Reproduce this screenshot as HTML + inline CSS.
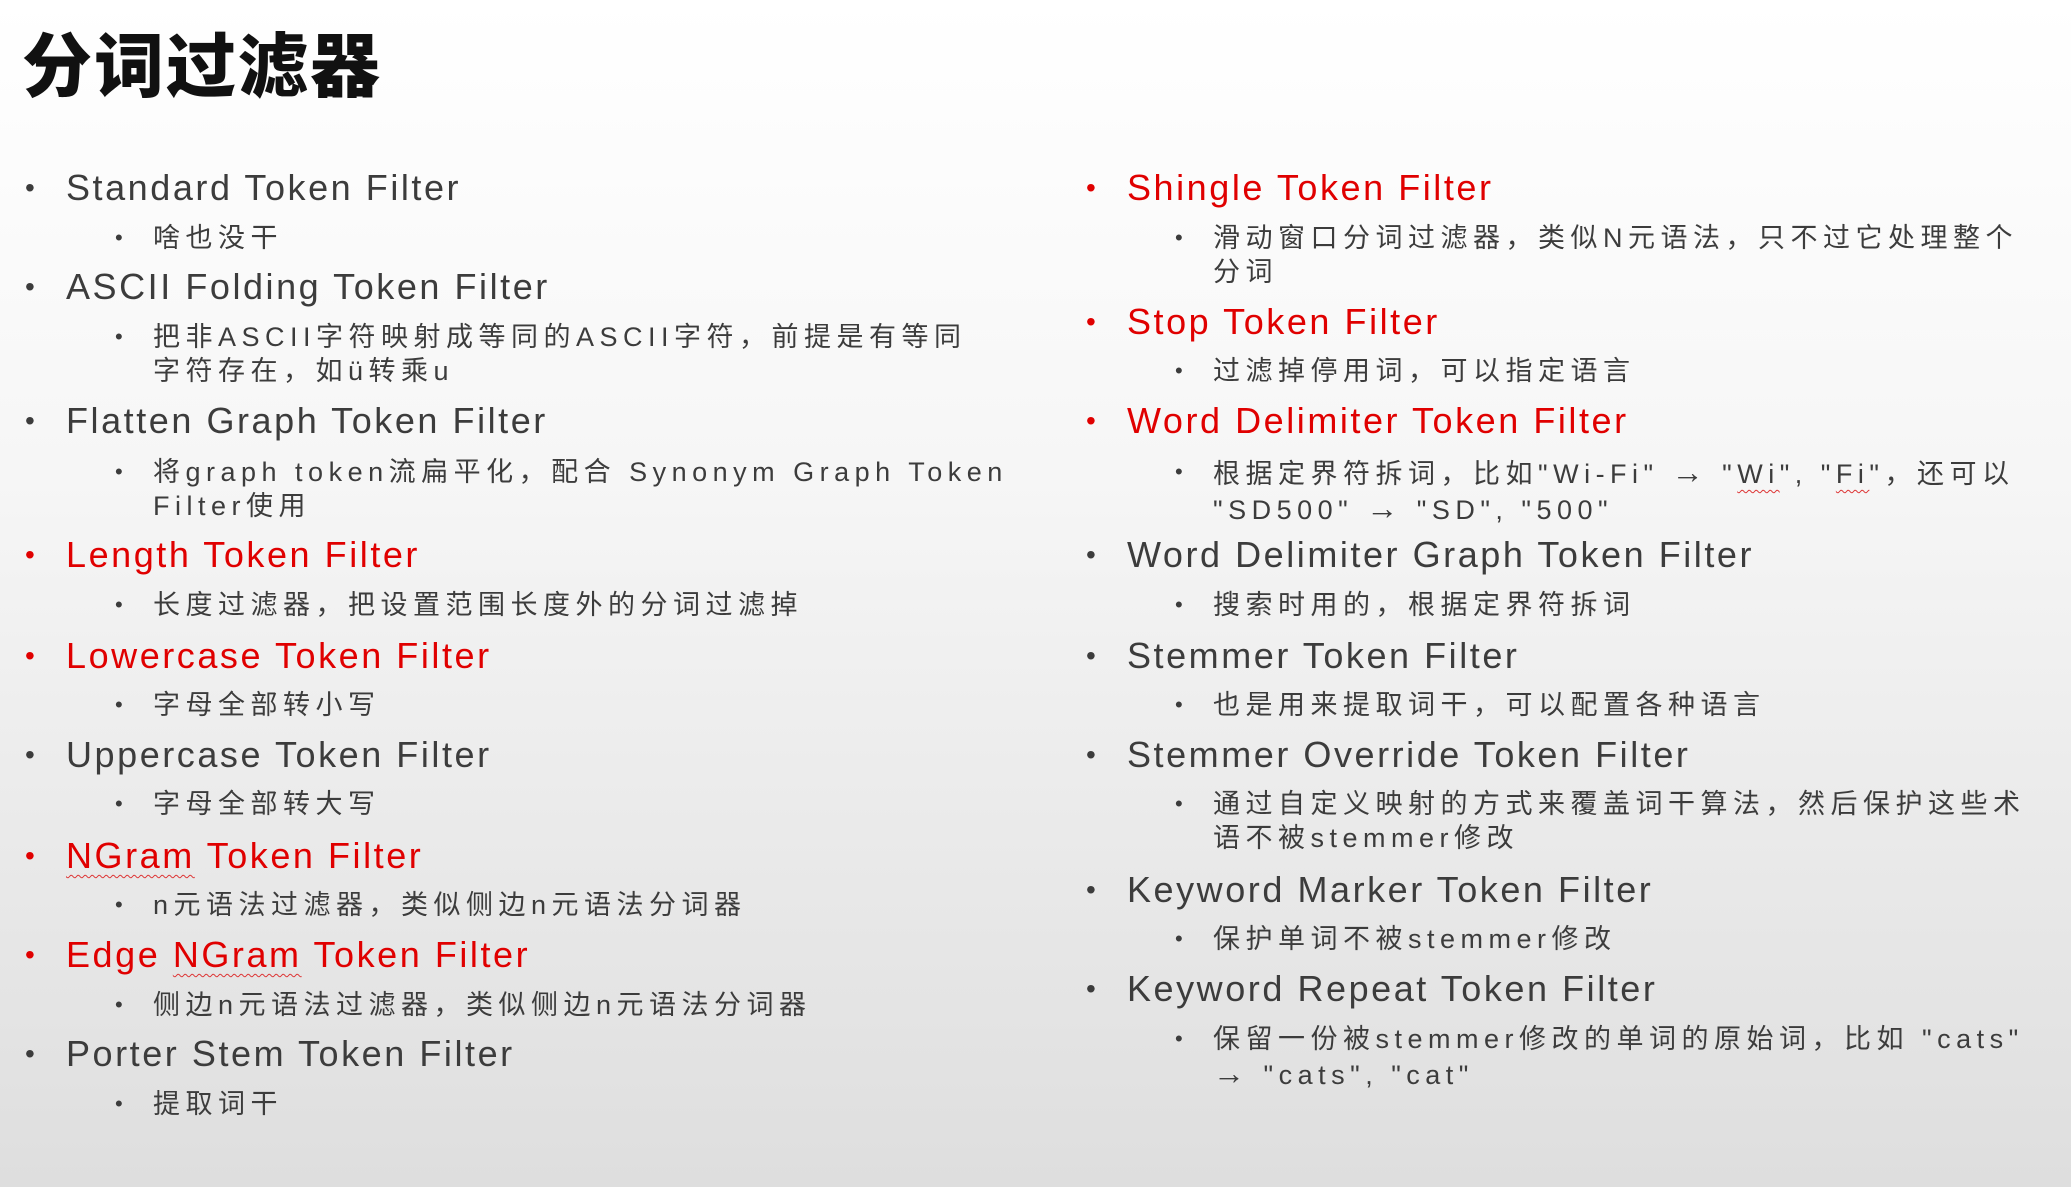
<!DOCTYPE html>
<html><head><meta charset="utf-8"><style>
html,body{margin:0;padding:0}
body{width:2071px;height:1187px;position:relative;overflow:hidden;background:linear-gradient(#ffffff 0%,#f6f6f6 40%,#dedede 100%);font-family:"Liberation Sans","Noto Sans CJK SC",sans-serif;color:#3c3c3c}
h1{position:absolute;left:22px;top:20px;margin:0;font-size:70px;font-weight:900;color:#111;font-family:"Noto Sans CJK SC",sans-serif;line-height:84px;letter-spacing:2px}
.a{position:absolute;font-size:36px;line-height:44px;letter-spacing:2.55px;white-space:nowrap}
.a::before{content:"•";position:absolute;left:-41px;font-size:28px}
.b{position:absolute;font-size:27px;line-height:34px;letter-spacing:5.5px;white-space:nowrap}
.b::before{content:"•";position:absolute;left:-38px;font-size:22px}
.r{color:#e00000}
.w{text-decoration:underline wavy #d33;text-decoration-thickness:1px;text-underline-offset:6px}
.ar{font-size:32px}
</style></head><body>
<h1>分词过滤器</h1>

<div class="a" style="left:66px;top:166px">Standard Token Filter</div>
<div class="b" style="left:153px;top:221px">啥也没干</div>
<div class="a" style="left:66px;top:265px">ASCII Folding Token Filter</div>
<div class="b" style="left:153px;top:320px">把非ASCII字符映射成等同的ASCII字符，前提是有等同<br>字符存在，如ü转乘u</div>
<div class="a" style="left:66px;top:399px">Flatten Graph Token Filter</div>
<div class="b" style="left:153px;top:455px">将graph token流扁平化，配合 Synonym Graph Token<br>Filter使用</div>
<div class="a r" style="left:66px;top:533px">Length Token Filter</div>
<div class="b" style="left:153px;top:588px">长度过滤器，把设置范围长度外的分词过滤掉</div>
<div class="a r" style="left:66px;top:634px">Lowercase Token Filter</div>
<div class="b" style="left:153px;top:688px">字母全部转小写</div>
<div class="a" style="left:66px;top:733px">Uppercase Token Filter</div>
<div class="b" style="left:153px;top:787px">字母全部转大写</div>
<div class="a r" style="left:66px;top:834px"><span class="w">NGram</span> Token Filter</div>
<div class="b" style="left:153px;top:888px">n元语法过滤器，类似侧边n元语法分词器</div>
<div class="a r" style="left:66px;top:933px">Edge <span class="w">NGram</span> Token Filter</div>
<div class="b" style="left:153px;top:988px">侧边n元语法过滤器，类似侧边n元语法分词器</div>
<div class="a" style="left:66px;top:1032px">Porter Stem Token Filter</div>
<div class="b" style="left:153px;top:1087px">提取词干</div>

<div class="a r" style="left:1127px;top:166px">Shingle Token Filter</div>
<div class="b" style="left:1213px;top:221px">滑动窗口分词过滤器，类似N元语法，只不过它处理整个<br>分词</div>
<div class="a r" style="left:1127px;top:300px">Stop Token Filter</div>
<div class="b" style="left:1213px;top:354px">过滤掉停用词，可以指定语言</div>
<div class="a r" style="left:1127px;top:399px">Word Delimiter Token Filter</div>
<div class="b" style="left:1213px;top:455px">根据定界符拆词，比如"Wi-Fi" <span class="ar">→</span> "<span class="w">Wi</span>", "<span class="w">Fi</span>"，还可以<br>"SD500" <span class="ar">→</span> "SD", "500"</div>
<div class="a" style="left:1127px;top:533px">Word Delimiter Graph Token Filter</div>
<div class="b" style="left:1213px;top:588px">搜索时用的，根据定界符拆词</div>
<div class="a" style="left:1127px;top:634px">Stemmer Token Filter</div>
<div class="b" style="left:1213px;top:688px">也是用来提取词干，可以配置各种语言</div>
<div class="a" style="left:1127px;top:733px">Stemmer Override Token Filter</div>
<div class="b" style="left:1213px;top:787px">通过自定义映射的方式来覆盖词干算法，然后保护这些术<br>语不被stemmer修改</div>
<div class="a" style="left:1127px;top:868px">Keyword Marker Token Filter</div>
<div class="b" style="left:1213px;top:922px">保护单词不被stemmer修改</div>
<div class="a" style="left:1127px;top:967px">Keyword Repeat Token Filter</div>
<div class="b" style="left:1213px;top:1022px">保留一份被stemmer修改的单词的原始词，比如 "cats"<br><span class="ar">→</span> "cats", "cat"</div>
</body></html>
